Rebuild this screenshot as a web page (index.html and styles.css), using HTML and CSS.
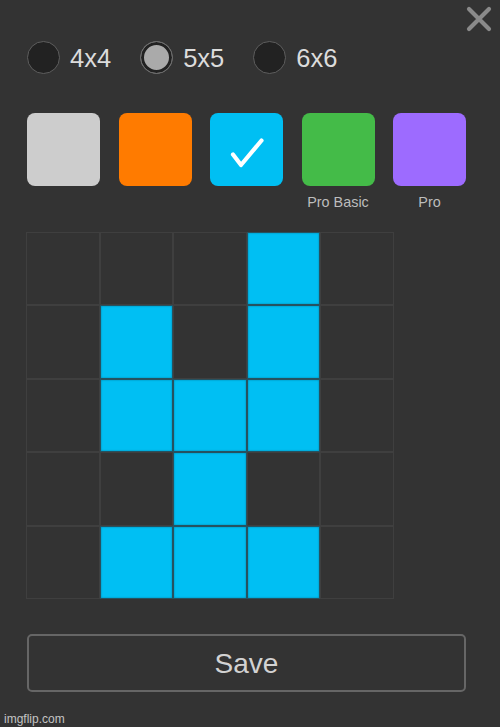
FILE: index.html
```html
<!DOCTYPE html>
<html>
<head>
<meta charset="utf-8">
<link rel="stylesheet" href="styles.css">
</head>
<body>
<div class="panel">
  <button class="close" aria-label="Close">
    <svg width="26" height="26" viewBox="0 0 26 26"><path d="M3 3 L23 23 M23 3 L3 23" stroke="#8a8a8a" stroke-width="4.2" stroke-linecap="round"/></svg>
  </button>

  <div class="sizes">
    <label class="opt"><span class="radio"></span><span class="opt-text">4x4</span></label>
    <label class="opt"><span class="radio checked"></span><span class="opt-text">5x5</span></label>
    <label class="opt"><span class="radio"></span><span class="opt-text">6x6</span></label>
  </div>

  <div class="swatches">
    <div class="sw-item"><div class="swatch gray"></div></div>
    <div class="sw-item"><div class="swatch orange"></div></div>
    <div class="sw-item"><div class="swatch blue">
      <svg width="73" height="73" viewBox="0 0 73 73"><path d="M23 41.5 L31 52 L51.5 27.5" fill="none" stroke="#fff" stroke-width="4.2" stroke-linecap="round" stroke-linejoin="round"/></svg>
    </div></div>
    <div class="sw-item"><div class="swatch green"></div><div class="sw-label">Pro Basic</div></div>
    <div class="sw-item"><div class="swatch purple"></div><div class="sw-label">Pro</div></div>
  </div>

  <div class="grid">
    <div class="cell"></div><div class="cell"></div><div class="cell"></div><div class="cell on"></div><div class="cell"></div>
    <div class="cell"></div><div class="cell on"></div><div class="cell"></div><div class="cell on"></div><div class="cell"></div>
    <div class="cell"></div><div class="cell on"></div><div class="cell on"></div><div class="cell on"></div><div class="cell"></div>
    <div class="cell"></div><div class="cell"></div><div class="cell on"></div><div class="cell"></div><div class="cell"></div>
    <div class="cell"></div><div class="cell on"></div><div class="cell on"></div><div class="cell on"></div><div class="cell"></div>
  </div>

  <button class="save">Save</button>

  <div class="watermark">imgflip.com</div>
</div>
</body>
</html>
```

FILE: styles.css
```css
html, body {
  margin: 0;
  padding: 0;
  background: #333333;
}
body {
  width: 500px;
  height: 727px;
  overflow: hidden;
  font-family: "Liberation Sans", Arial, sans-serif;
}
.panel {
  position: relative;
  padding: 40px 0 0 27px;
  height: 727px;
  box-sizing: border-box;
}
.close {
  position: absolute;
  top: 6px;
  left: 466px;
  padding: 0;
  border: 0;
  background: none;
  width: 26px;
  height: 26px;
}
.close svg { display: block; }

.sizes {
  display: flex;
  align-items: center;
  gap: 29px;
  height: 34px;
}
.opt {
  display: flex;
  align-items: center;
  gap: 10px;
}
.radio {
  width: 33px;
  height: 33px;
  box-sizing: border-box;
  border-radius: 50%;
  background: #222222;
  border: 1.5px solid #5e5e5e;
}
.radio.checked {
  background: #aaaaaa;
  box-shadow: inset 0 0 0 3px #222222;
  border: 1.5px solid #6a6a6a;
}
.opt-text {
  color: #dcdcdc;
  font-size: 25.5px;
  line-height: 33px;
  padding-top: 2px;
}

.swatches {
  display: flex;
  gap: 18.5px;
  margin-top: 39px;
}
.sw-item {
  width: 73px;
  display: flex;
  flex-direction: column;
  align-items: center;
}
.swatch {
  width: 73px;
  height: 73px;
  border-radius: 8px;
}
.swatch svg { display: block; }
.gray { background: #cdcdcd; }
.orange { background: #ff7b00; }
.blue { background: #00bff3; }
.green { background: #44bb48; }
.purple { background: #9d6bff; }
.sw-label {
  margin-top: 7px;
  line-height: 18px;
  font-size: 14.4px;
  color: #bdbdbd;
  white-space: nowrap;
}
.sw-item:not(:has(.sw-label)) { padding-bottom: 25px; }

.grid {
  display: grid;
  grid-template-columns: repeat(5, 73.6px);
  grid-auto-rows: 73.4px;
  margin-top: 21px;
  margin-left: -1px;
  width: 368px;
}
.cell {
  box-sizing: border-box;
  border: 1px solid #3f3f3f;
  background: #333333;
}
.cell.on {
  background: #00bff3;
  border-color: #265260;
  box-shadow: inset 0 0 2px rgba(0, 0, 0, 0.35);
}

.save {
  display: block;
  margin-top: 35px;
  width: 439px;
  height: 58px;
  box-sizing: border-box;
  border: 2px solid #666666;
  border-radius: 5px;
  background: #333333;
  color: #d2d2d2;
  font-family: "Liberation Sans", Arial, sans-serif;
  font-size: 28px;
  padding: 3px 0 0;
}

.watermark {
  position: absolute;
  left: 4px;
  top: 712px;
  font-size: 12px;
  line-height: 14px;
  color: #c4c4c4;
}
```
